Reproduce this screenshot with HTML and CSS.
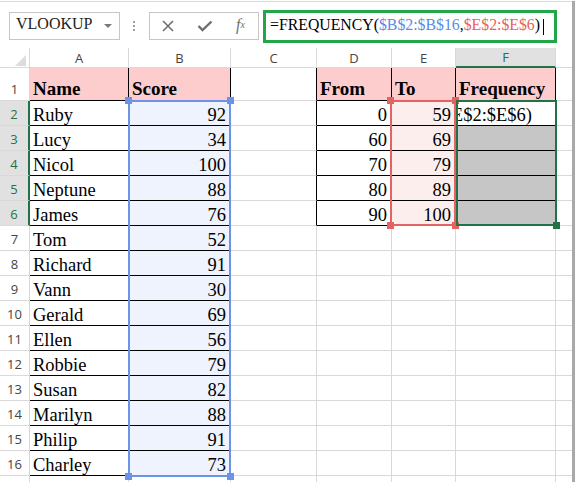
FILE: index.html
```html
<!DOCTYPE html>
<html lang="en">
<head>
    <meta charset="UTF-8">
    <meta name="viewport" content="width=device-width, initial-scale=1.0">
    <title>FREQUENCY</title>
    <link rel="stylesheet" href="styles.css">
</head>
<body>
    <div class="window">
        <div class="formula-bar">
            <div class="name-box">VLOOKUP<span class="drop"></span></div>
            <div class="grip"><i></i><i></i><i></i></div>
            <div class="fx-box">
                <span class="btn"><svg width="12" height="12" viewBox="0 0 12 12"><path d="M1 1L11 11M11 1L1 11" stroke="#6f6f6f" stroke-width="1.6" fill="none"/></svg></span>
                <span class="btn"><svg width="16" height="12" viewBox="0 0 16 12"><path d="M1.5 6L5.5 10L14.5 1.5" stroke="#6f6f6f" stroke-width="2.4" fill="none"/></svg></span>
                <span class="btn fx">f<sub>x</sub></span>
            </div>
            <div class="formula">=FREQUENCY(<span class="ref-b">$B$2:$B$16</span>,<span class="ref-e">$E$2:$E$6</span>)<span class="cursor"></span></div>
        </div>

        <div class="sheet">
            <div class="row head">
                <div class="corner"></div><div>A</div><div>B</div><div>C</div><div>D</div><div>E</div><div class="cur">F</div><div></div>
            </div>
            <div class="row r1">
                <div class="n">1</div>
                <div class="t hd bd">Name</div>
                <div class="t hd bd">Score</div>
                <div class="t bkr"></div>
                <div class="t hd bd">From</div>
                <div class="t hd bd">To</div>
                <div class="t hd bd">Frequency</div>
                <div class="t"></div>
            </div>
            <div class="row sel">
                <div class="n">2</div>
                <div class="t bd">Ruby</div>
                <div class="t num bd fill-b">92</div>
                <div class="t bkr"></div>
                <div class="t num bd">0</div>
                <div class="t num bd fill-e">59</div>
                <div class="t bd edit"><span>E$2:$E$6)</span></div>
                <div class="t"></div>
            </div>
            <div class="row sel">
                <div class="n">3</div>
                <div class="t bd">Lucy</div>
                <div class="t num bd fill-b">34</div>
                <div class="t bkr"></div>
                <div class="t num bd">60</div>
                <div class="t num bd fill-e">69</div>
                <div class="t bd fill-g"></div>
                <div class="t"></div>
            </div>
            <div class="row sel">
                <div class="n">4</div>
                <div class="t bd">Nicol</div>
                <div class="t num bd fill-b">100</div>
                <div class="t bkr"></div>
                <div class="t num bd">70</div>
                <div class="t num bd fill-e">79</div>
                <div class="t bd fill-g"></div>
                <div class="t"></div>
            </div>
            <div class="row sel">
                <div class="n">5</div>
                <div class="t bd">Neptune</div>
                <div class="t num bd fill-b">88</div>
                <div class="t bkr"></div>
                <div class="t num bd">80</div>
                <div class="t num bd fill-e">89</div>
                <div class="t bd fill-g"></div>
                <div class="t"></div>
            </div>
            <div class="row sel">
                <div class="n">6</div>
                <div class="t bd">James</div>
                <div class="t num bd fill-b">76</div>
                <div class="t bkr"></div>
                <div class="t num bd">90</div>
                <div class="t num bd fill-e">100</div>
                <div class="t bd fill-g"></div>
                <div class="t"></div>
            </div>
            <div class="row">
                <div class="n">7</div>
                <div class="t bd">Tom</div>
                <div class="t num bd fill-b">52</div>
                <div class="t"></div><div class="t"></div><div class="t"></div><div class="t"></div><div class="t"></div>
            </div>
            <div class="row">
                <div class="n">8</div>
                <div class="t bd">Richard</div>
                <div class="t num bd fill-b">91</div>
                <div class="t"></div><div class="t"></div><div class="t"></div><div class="t"></div><div class="t"></div>
            </div>
            <div class="row">
                <div class="n">9</div>
                <div class="t bd">Vann</div>
                <div class="t num bd fill-b">30</div>
                <div class="t"></div><div class="t"></div><div class="t"></div><div class="t"></div><div class="t"></div>
            </div>
            <div class="row">
                <div class="n">10</div>
                <div class="t bd">Gerald</div>
                <div class="t num bd fill-b">69</div>
                <div class="t"></div><div class="t"></div><div class="t"></div><div class="t"></div><div class="t"></div>
            </div>
            <div class="row">
                <div class="n">11</div>
                <div class="t bd">Ellen</div>
                <div class="t num bd fill-b">56</div>
                <div class="t"></div><div class="t"></div><div class="t"></div><div class="t"></div><div class="t"></div>
            </div>
            <div class="row">
                <div class="n">12</div>
                <div class="t bd">Robbie</div>
                <div class="t num bd fill-b">79</div>
                <div class="t"></div><div class="t"></div><div class="t"></div><div class="t"></div><div class="t"></div>
            </div>
            <div class="row">
                <div class="n">13</div>
                <div class="t bd">Susan</div>
                <div class="t num bd fill-b">82</div>
                <div class="t"></div><div class="t"></div><div class="t"></div><div class="t"></div><div class="t"></div>
            </div>
            <div class="row">
                <div class="n">14</div>
                <div class="t bd">Marilyn</div>
                <div class="t num bd fill-b">88</div>
                <div class="t"></div><div class="t"></div><div class="t"></div><div class="t"></div><div class="t"></div>
            </div>
            <div class="row">
                <div class="n">15</div>
                <div class="t bd">Philip</div>
                <div class="t num bd fill-b">91</div>
                <div class="t"></div><div class="t"></div><div class="t"></div><div class="t"></div><div class="t"></div>
            </div>
            <div class="row">
                <div class="n">16</div>
                <div class="t bd">Charley</div>
                <div class="t num bd fill-b">73</div>
                <div class="t"></div><div class="t"></div><div class="t"></div><div class="t"></div><div class="t"></div>
            </div>
            <div class="row tail">
                <div class="n"></div><div></div><div></div><div></div><div></div><div></div><div></div><div></div>
            </div>

            <!-- range outlines drawn over the cells -->
            <div class="range range-b"><i class="tl"></i><i class="tr"></i><i class="bl"></i><i class="br"></i></div>
            <div class="range range-e"><i class="tl"></i><i class="tr"></i><i class="bl"></i><i class="br"></i></div>
            <div class="range range-f"><i class="br"></i></div>
        </div>
    </div>
</body>
</html>
```

FILE: styles.css
```css
* {
    box-sizing: border-box;
}

body {
    margin: 0;
    background: #fff;
    font-family: "Liberation Serif", "Times New Roman", serif;
    color: #000;
}

.window {
    width: 572px;
    height: 482px;
    overflow: hidden;
    background: #fff;
    box-shadow: 2px 2px 1px 1px #a9a9a9;
}

/* formula bar */
.formula-bar {
    display: flex;
    align-items: flex-start;
    height: 47px;
    margin-top: 1px;
    border-top: 1px solid #dadada;
    padding: 8px 0 0 9px;
}

.name-box {
    display: flex;
    align-items: center;
    width: 111px;
    height: 28px;
    margin-top: 2px;
    padding: 0 0 4px 6px;
    border: 1px solid #c6c6c6;
    font-size: 16px;
    color: #222;
}

.drop {
    margin-left: auto;
    margin-right: 7px;
    margin-top: 4px;
    border-left: 4px solid transparent;
    border-right: 4px solid transparent;
    border-top: 4px solid #7a7a7a;
}

.grip {
    display: flex;
    flex-direction: column;
    gap: 2px;
    margin: 11px 14px 0 13px;
}

.grip i {
    width: 2px;
    height: 2px;
    background: #a0a0a0;
}

.fx-box {
    display: flex;
    width: 110px;
    height: 28px;
    margin-top: 2px;
    border: 1px solid #c6c6c6;
}

.btn {
    display: flex;
    align-items: center;
    justify-content: center;
    width: 36px;
}

.btn:nth-child(2) {
    width: 37px;
}

.btn:nth-child(3) {
    width: 35px;
}

.fx {
    font-style: italic;
    font-size: 16px;
    color: #6f6f6f;
    padding-bottom: 3px;
}

.fx sub {
    font-size: 10px;
}

.formula {
    width: 294px;
    height: 33px;
    margin-left: 4px;
    padding-left: 4px;
    border: 3px solid #23a649;
    font-size: 15.8px;
    line-height: 23px;
    white-space: nowrap;
}

.ref-b {
    color: #5a8ae6;
}

.ref-e {
    color: #e8625d;
}

.cursor {
    display: inline-block;
    width: 1px;
    height: 16px;
    margin-left: 3px;
    background: #000;
    vertical-align: -5px;
}

/* sheet grid */
.sheet {
    position: relative;
}

.row {
    display: grid;
    grid-template-columns: 30px 99px 102px 86px 75px 64px 100px 16px;
    height: 25px;
}

.row > div {
    border-right: 1px solid #d9d9d9;
    border-bottom: 1px solid #d9d9d9;
}

.row > div:last-child {
    border-right: 0;
}

.head {
    height: 20px;
    font-family: "Open Sans", "Liberation Sans", sans-serif;
    font-size: 13px;
    color: #444;
}

.head > div {
    display: flex;
    align-items: center;
    justify-content: center;
}

.head .corner {
    align-items: flex-end;
    justify-content: flex-end;
    padding: 0 3px 1px 0;
}

.corner::after {
    content: "";
    border-left: 11px solid transparent;
    border-bottom: 11px solid #dcdcdc;
}

.head .cur {
    background: #e1e1e1;
    color: #217346;
    border-bottom: 2px solid #217346;
}

.r1 {
    height: 33px;
}

.tail {
    height: 10px;
}

.n {
    display: flex;
    align-items: flex-end;
    justify-content: center;
    padding-bottom: 3px;
    font-family: "Open Sans", "Liberation Sans", sans-serif;
    font-size: 13px;
    line-height: 16px;
    color: #444;
}

.row.sel .n {
    background: #e1e1e1;
    color: #217346;
    border-right: 2px solid #217346;
}

.t {
    display: flex;
    align-items: flex-end;
    padding: 0 4px 0 3px;
    font-size: 18.5px;
    line-height: 20px;
    white-space: nowrap;
    overflow: hidden;
}

.num {
    justify-content: flex-end;
}

.hd {
    background: #fdcccc;
    font-weight: bold;
    font-size: 19px;
    padding-bottom: 1px;
}

.row .bd {
    border-color: #000;
}

.row .bkr {
    border-right-color: #000;
}

.fill-b {
    background: #eef3fd;
}

.fill-e {
    background: #fdeeee;
}

.fill-g {
    background: #c6c6c6;
}

.edit {
    justify-content: flex-end;
    padding-right: 23px;
}

.edit span {
    flex-shrink: 0;
}

/* highlighted ranges */
.range {
    position: absolute;
    border: 2px solid;
}

.range i {
    position: absolute;
    width: 7px;
    height: 7px;
}

.range-b {
    left: 128px;
    top: 52px;
    width: 103px;
    height: 377px;
    border-color: #6c93e6;
}

.range-b i {
    background: #6c93e6;
}

.range-e {
    left: 390px;
    top: 52px;
    width: 66px;
    height: 126px;
    border-color: #e46262;
}

.range-e i {
    background: #e46262;
}

.range-f {
    left: 456px;
    top: 52px;
    width: 101px;
    height: 126px;
    border-color: #217346;
}

.range-f i {
    background: #217346;
}

.tl { left: -5px; top: -5px; }
.tr { right: -5px; top: -5px; }
.bl { left: -5px; bottom: -5px; }
.br { right: -5px; bottom: -5px; }
```
